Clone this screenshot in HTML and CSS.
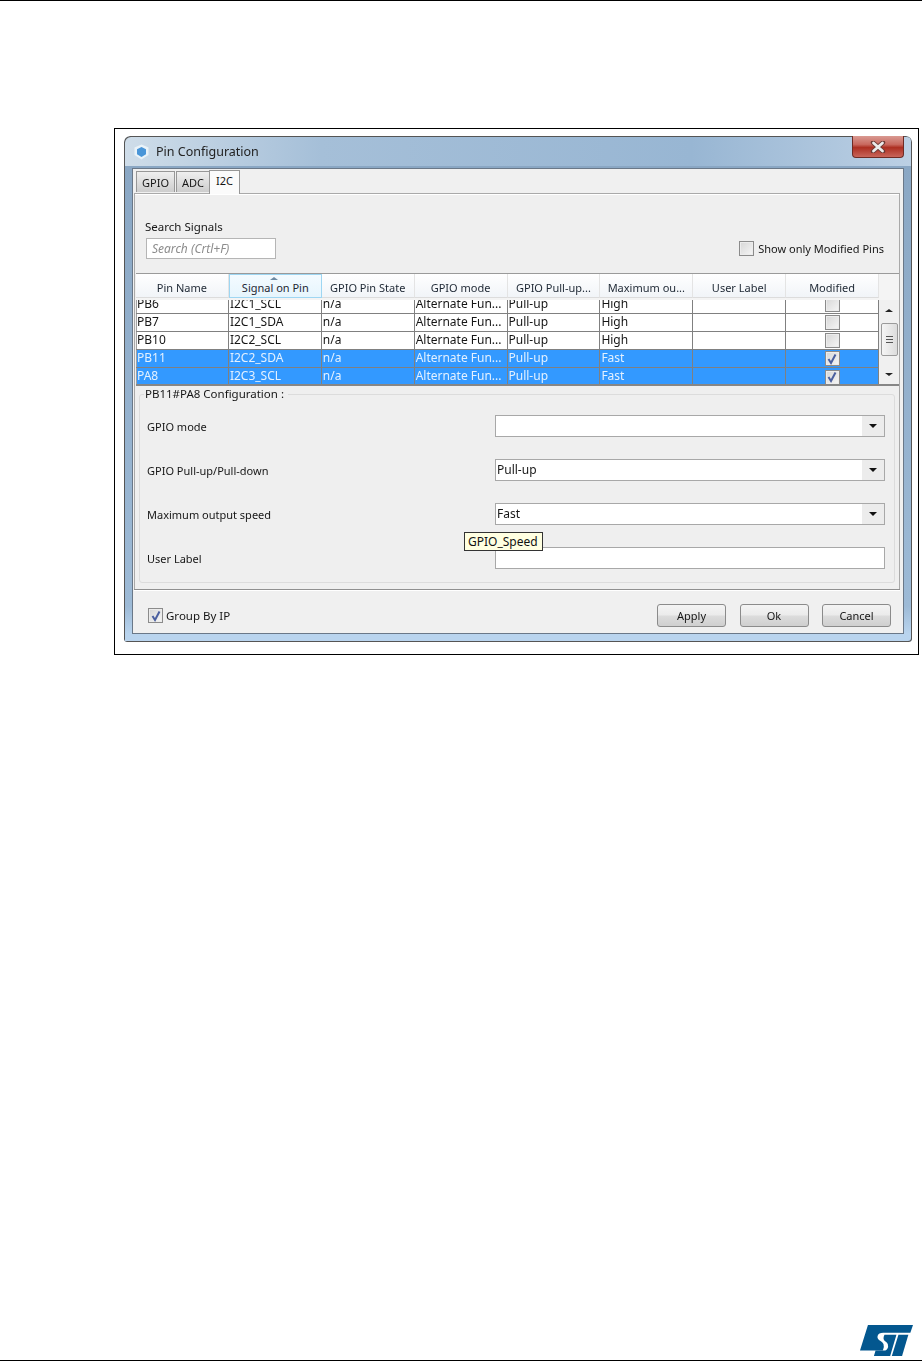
FILE: index.html
```html
<!DOCTYPE html>
<html lang="en">
<head>
    <meta charset="UTF-8">
    <title>Pin Configuration</title>
    <link rel="stylesheet" href="styles.css">
</head>
<body>
    <div class="page">
        <div class="frame">
            <div class="window">
                <!-- title bar -->
                <div class="titlebar">
                    <svg class="app-icon" width="15" height="16" viewBox="0 0 15 16">
                        <path d="M7.5 0.5 L14.5 3.5 V11 L7.5 15.5 L0.5 11 V3.5 Z" fill="#eaf3f9"/>
                        <path d="M7.5 3 L12 5.2 V10.2 L7.5 13 L3 10.2 V5.2 Z" fill="#4a96d8"/>
                    </svg>
                    <span class="title">Pin Configuration</span>
                    <div class="close">
                        <svg width="18" height="12" viewBox="0 0 18 12">
                            <path d="M4 1.5 L14 10.5 M14 1.5 L4 10.5" stroke="#6b3a36" stroke-width="4.4" stroke-linecap="round"/>
                            <path d="M4.5 2 L13.5 10 M13.5 2 L4.5 10" stroke="#ececec" stroke-width="2.8" stroke-linecap="round"/>
                        </svg>
                    </div>
                </div>

                <div class="content">
                    <div class="tabs">
                        <div class="tab">GPIO</div>
                        <div class="tab">ADC</div>
                        <div class="tab active">I2C</div>
                    </div>

                    <div class="panel">
                        <div class="search-row">
                            <div class="search">
                                <div class="search-label">Search Signals</div>
                                <div class="search-input">Search (Crtl+F)</div>
                            </div>
                            <div class="only-modified">
                                <span class="check"></span>
                                <span>Show only Modified Pins</span>
                            </div>
                        </div>

                        <!-- pin table -->
                        <div class="table">
                            <div class="thead">
                                <div class="th">Pin Name</div>
                                <div class="th sorted">Signal on Pin</div>
                                <div class="th">GPIO Pin State</div>
                                <div class="th">GPIO mode</div>
                                <div class="th">GPIO Pull-up...</div>
                                <div class="th">Maximum ou...</div>
                                <div class="th">User Label</div>
                                <div class="th">Modified</div>
                            </div>
                            <div class="tbody">
                                <div class="rows">
                                    <div class="rows-inner">
                                        <div class="row">
                                            <div class="td">PB6</div><div class="td">I2C1_SCL</div><div class="td">n/a</div><div class="td">Alternate Fun...</div><div class="td">Pull-up</div><div class="td">High</div><div class="td"></div><div class="td mid"><span class="check"></span></div>
                                        </div>
                                        <div class="row">
                                            <div class="td">PB7</div><div class="td">I2C1_SDA</div><div class="td">n/a</div><div class="td">Alternate Fun...</div><div class="td">Pull-up</div><div class="td">High</div><div class="td"></div><div class="td mid"><span class="check"></span></div>
                                        </div>
                                        <div class="row">
                                            <div class="td">PB10</div><div class="td">I2C2_SCL</div><div class="td">n/a</div><div class="td">Alternate Fun...</div><div class="td">Pull-up</div><div class="td">High</div><div class="td"></div><div class="td mid"><span class="check"></span></div>
                                        </div>
                                        <div class="row selected">
                                            <div class="td">PB11</div><div class="td">I2C2_SDA</div><div class="td">n/a</div><div class="td">Alternate Fun...</div><div class="td">Pull-up</div><div class="td">Fast</div><div class="td"></div><div class="td mid"><span class="check"><svg width="12" height="12" viewBox="0 0 12 12"><path d="M2.5 6 L5 10 L9.5 1.5" fill="none" stroke="#4a5f9f" stroke-width="2"/></svg></span></div>
                                        </div>
                                        <div class="row selected">
                                            <div class="td">PA8</div><div class="td">I2C3_SCL</div><div class="td">n/a</div><div class="td">Alternate Fun...</div><div class="td">Pull-up</div><div class="td">Fast</div><div class="td"></div><div class="td mid"><span class="check"><svg width="12" height="12" viewBox="0 0 12 12"><path d="M2.5 6 L5 10 L9.5 1.5" fill="none" stroke="#4a5f9f" stroke-width="2"/></svg></span></div>
                                        </div>
                                    </div>
                                </div>
                                <div class="scrollbar">
                                    <div class="arrow-up"></div>
                                    <div class="thumb"><span></span><span></span><span></span></div>
                                    <div class="arrow-down"></div>
                                </div>
                            </div>
                        </div>

                        <!-- config group -->
                        <fieldset class="group">
                            <legend>PB11#PA8 Configuration :</legend>
                            <div class="form-row">
                                <label>GPIO mode</label>
                                <div class="combo"><span class="combo-text"></span><span class="combo-btn"></span></div>
                            </div>
                            <div class="form-row">
                                <label>GPIO Pull-up/Pull-down</label>
                                <div class="combo"><span class="combo-text">Pull-up</span><span class="combo-btn"></span></div>
                            </div>
                            <div class="form-row">
                                <label>Maximum output speed</label>
                                <div class="combo"><span class="combo-text">Fast</span><span class="combo-btn"></span></div>
                            </div>
                            <div class="form-row">
                                <label>User Label</label>
                                <div class="text-field"><div class="tooltip">GPIO_Speed</div></div>
                            </div>
                        </fieldset>
                    </div>

                    <div class="bottom-bar">
                        <div class="group-by">
                            <span class="check"><svg width="12" height="12" viewBox="0 0 12 12"><path d="M2.5 6 L5 10 L9.5 1.5" fill="none" stroke="#4a5f9f" stroke-width="2"/></svg></span>
                            <span>Group By IP</span>
                        </div>
                        <div class="buttons">
                            <button>Apply</button>
                            <button>Ok</button>
                            <button>Cancel</button>
                        </div>
                    </div>
                </div>
            </div>
        </div>

        <div class="footer">
            <svg width="53" height="32" viewBox="0 0 160 96" class="logo">
                <path fill="#03578f" d="M24 0 H160 L152 23 H70 Q56 23 53 33 Q51 42 62 48 L67 52 Q74 58 72 66 L69 77 H0 Z"/>
                <path fill="#03578f" d="M74 29 H110 L91 93 H42 L47 77 H72 Q82 77 85 66 Q87 58 80 52 L74 47 Q68 41 74 29 Z"/>
                <path fill="#03578f" d="M116 29 H146 L127 93 H96 Z"/>
            </svg>
        </div>
    </div>
</body>
</html>
```

FILE: styles.css
```css
* {
    box-sizing: border-box;
}

body {
    margin: 0;
    background-color: #ffffff;
    font-family: "Noto Sans", Tahoma, sans-serif;
    font-size: 11px;
    color: #161616;
}

.page {
    height: 1361px;
    border-top: 1px solid #000;
    display: flex;
    flex-direction: column;
}

.frame {
    width: 805px;
    height: 527px;
    margin: 127px 0 0 114px;
    padding: 7px 6px 12px 9px;
    border: 1px solid #000;
}

.window {
    height: 506px;
    padding: 0 8px 8px;
    border-radius: 6px 6px 3px 3px;
    box-shadow: inset 1px 1px 0 #555, inset -1px -1px 0 #555;
    background: linear-gradient(180deg, transparent 30px, #8aa7c4 30px, #9dbad6 470px, #b9d4ee 498px),
                linear-gradient(90deg, #cfdde9 0, #a5bfd8 25%, #98b6d3 72%, #bcd0e4 100%);
    filter: blur(0.4px);
}

.titlebar {
    height: 32px;
    display: flex;
    align-items: flex-start;
}

.app-icon {
    margin: 8px 0 0 2px;
}

.title {
    margin: 7px 0 0 7px;
    font-size: 12.5px;
    color: #222;
}

.close {
    width: 52px;
    height: 22px;
    margin-left: auto;
    display: flex;
    align-items: center;
    justify-content: center;
    border: 1px solid #6f2b24;
    border-top: none;
    border-radius: 0 0 4px 4px;
    background: linear-gradient(180deg, #d99a92 0, #c9695f 40%, #ad2f22 55%, #c8655a 100%);
}

.content {
    height: 466px;
    padding: 0 3px 0 1px;
    border: 1px solid #6a7888;
    background-color: #f0f0f0;
    display: flex;
    flex-direction: column;
}

.tabs {
    height: 24px;
    padding-left: 2px;
    display: flex;
    align-items: flex-end;
}

.tab {
    height: 21px;
    padding: 0 5px;
    margin-right: 1px;
    display: flex;
    align-items: center;
    border: 1px solid #979797;
    border-bottom: none;
    background: linear-gradient(180deg, #efefef, #cdcdcd);
    margin-bottom: 1px;
}

.tab.active {
    height: 24px;
    margin: 0 0 -1px -2px;
    padding: 0 6px 4px;
    background: #fbfbfb;
    position: relative;
}

.panel {
    height: 396px;
    padding: 0 0 0 1px;
    border: 1px solid #a9a9a9;
    border-bottom: none;
    box-shadow: inset 0 1px 0 #fff;
    background-color: #efefef;
}

.search-row {
    height: 79px;
    padding: 0 15px 14px 9px;
    display: flex;
    justify-content: space-between;
    align-items: flex-end;
}

.search-label {
    margin-bottom: 3px;
    line-height: 17px;
    font-size: 11.5px;
}

.search-input {
    width: 130px;
    height: 21px;
    margin-left: 1px;
    padding-left: 5px;
    line-height: 19px;
    border: 1px solid #b5b5b5;
    background: #fff;
    color: #8c8c8c;
    font-size: 12px;
    font-style: italic;
}

.only-modified {
    display: flex;
    align-items: center;
    gap: 4px;
    margin-bottom: 3px;
}

.check {
    width: 15px;
    height: 15px;
    display: inline-flex;
    align-items: center;
    justify-content: center;
    border: 1px solid #8b8b8b;
    background: linear-gradient(135deg, #d6d6d6, #f6f6f6);
    box-shadow: inset 0 0 0 1px #ececec;
}

.table {
    border-top: 1px solid #9a9a9a;
    border-bottom: 2px solid #868686;
}

.thead {
    height: 24px;
    padding-right: 20px;
    display: grid;
    grid-template-columns: repeat(8, 1fr);
    background: #f4f4f4;
}

.th {
    padding-top: 6px;
    text-align: center;
    border-right: 1px solid #e4e4e4;
    border-bottom: 1px solid #dcdcdc;
    background: linear-gradient(180deg, #ffffff, #f1f4f8);
    color: #1d2733;
}

.th.sorted {
    position: relative;
    border: 1px solid #9ed6f2;
    padding-top: 5px;
    background: linear-gradient(180deg, #f4fbff, #e6f5fd);
}

.th.sorted::before {
    content: "";
    position: absolute;
    top: 2px;
    left: 40px;
    border-left: 4px solid transparent;
    border-right: 4px solid transparent;
    border-bottom: 3px solid #6d8aa3;
}

.tbody {
    height: 84px;
    margin-top: 2px;
    display: flex;
    background: #fff;
    box-shadow: 0 -2px 0 #f4f4f4;
}

.rows {
    flex: 1;
    overflow: hidden;
}

.rows-inner {
    margin-top: -4px;
}

.row {
    height: 18px;
    display: grid;
    grid-template-columns: repeat(8, 1fr);
    border-bottom: 1px solid #808080;
    font-size: 12px;
    line-height: 16px;
    color: #161616;
}

.row:last-child {
    border-bottom: none;
}

.td {
    padding-left: 1px;
    white-space: nowrap;
    overflow: hidden;
    border-right: 1px solid #808080;
}

.td:first-child {
    padding-left: 0;
    border-left: 1px solid #a0a0a0;
}

.td.mid {
    display: flex;
    align-items: center;
    justify-content: center;
    padding-left: 0;
}

.row.selected {
    background-color: #3399ff;
    color: #e4f1ff;
}

.scrollbar {
    width: 20px;
    background: #f0f0f0;
    display: flex;
    flex-direction: column;
    align-items: center;
}

.arrow-up {
    margin: 9px 0 11px;
    border-left: 4px solid transparent;
    border-right: 4px solid transparent;
    border-bottom: 3px solid #222;
}

.thumb {
    width: 17px;
    height: 33px;
    display: flex;
    flex-direction: column;
    align-items: center;
    justify-content: center;
    gap: 2px;
    border: 1px solid #9a9a9a;
    border-radius: 2px;
    background: linear-gradient(90deg, #f5f5f5, #dcdcdc);
}

.thumb span {
    width: 7px;
    height: 1px;
    background: #555;
}

.arrow-down {
    margin-top: 17px;
    border-left: 4px solid transparent;
    border-right: 4px solid transparent;
    border-top: 3px solid #222;
}

.group {
    height: 196px;
    margin: 1px 4px 0 3px;
    padding: 14px 9px 0 7px;
    border: 1px solid #dcdcdc;
    border-radius: 3px;
}

.group legend {
    margin-left: -3px;
    padding: 0 4px 0 1px;
    font-size: 11.5px;
    line-height: 14px;
}

.form-row {
    height: 22px;
    margin-bottom: 22px;
    display: flex;
    justify-content: space-between;
    align-items: center;
}

.combo, .text-field {
    width: 390px;
    height: 22px;
    border: 1px solid #a8a8a8;
    background: #fff;
}

.combo {
    display: flex;
    justify-content: space-between;
    font-size: 12px;
    line-height: 19px;
}

.combo-text {
    padding-left: 1px;
}

.combo-btn {
    width: 22px;
    display: flex;
    align-items: center;
    justify-content: center;
    background: #ececec;
}

.combo-btn::after {
    content: "";
    border-left: 4px solid transparent;
    border-right: 4px solid transparent;
    border-top: 4px solid #111;
}

.text-field {
    position: relative;
}

.tooltip {
    position: absolute;
    left: -32px;
    top: -16px;
    width: 79px;
    height: 19px;
    padding-left: 3px;
    font-size: 12px;
    line-height: 17px;
    white-space: nowrap;
    border: 1px solid #333;
    background: #ffffe1;
    color: #111;
}

.bottom-bar {
    height: 44px;
    padding: 14px 9px 0 14px;
    display: flex;
    justify-content: space-between;
    align-items: flex-start;
    border-top: 1px solid #8f8f8f;
    box-shadow: inset 0 1px 0 #fff;
}

.group-by {
    display: flex;
    align-items: center;
    gap: 3px;
    height: 23px;
    font-size: 11.5px;
}

.buttons {
    display: flex;
    gap: 13.5px;
}

button {
    width: 69px;
    height: 23px;
    padding: 0;
    font-family: inherit;
    font-size: 11px;
    color: #161616;
    border: 1px solid #8b8b8b;
    border-radius: 3px;
    background: linear-gradient(180deg, #f4f4f4 0, #ebebeb 48%, #dcdcdc 52%, #cfcfcf 100%);
}

.footer {
    margin-top: auto;
    height: 36px;
    padding: 0 9px 0 860px;
    border-bottom: 1px solid #000;
}

.logo {
    display: block;
}
```
